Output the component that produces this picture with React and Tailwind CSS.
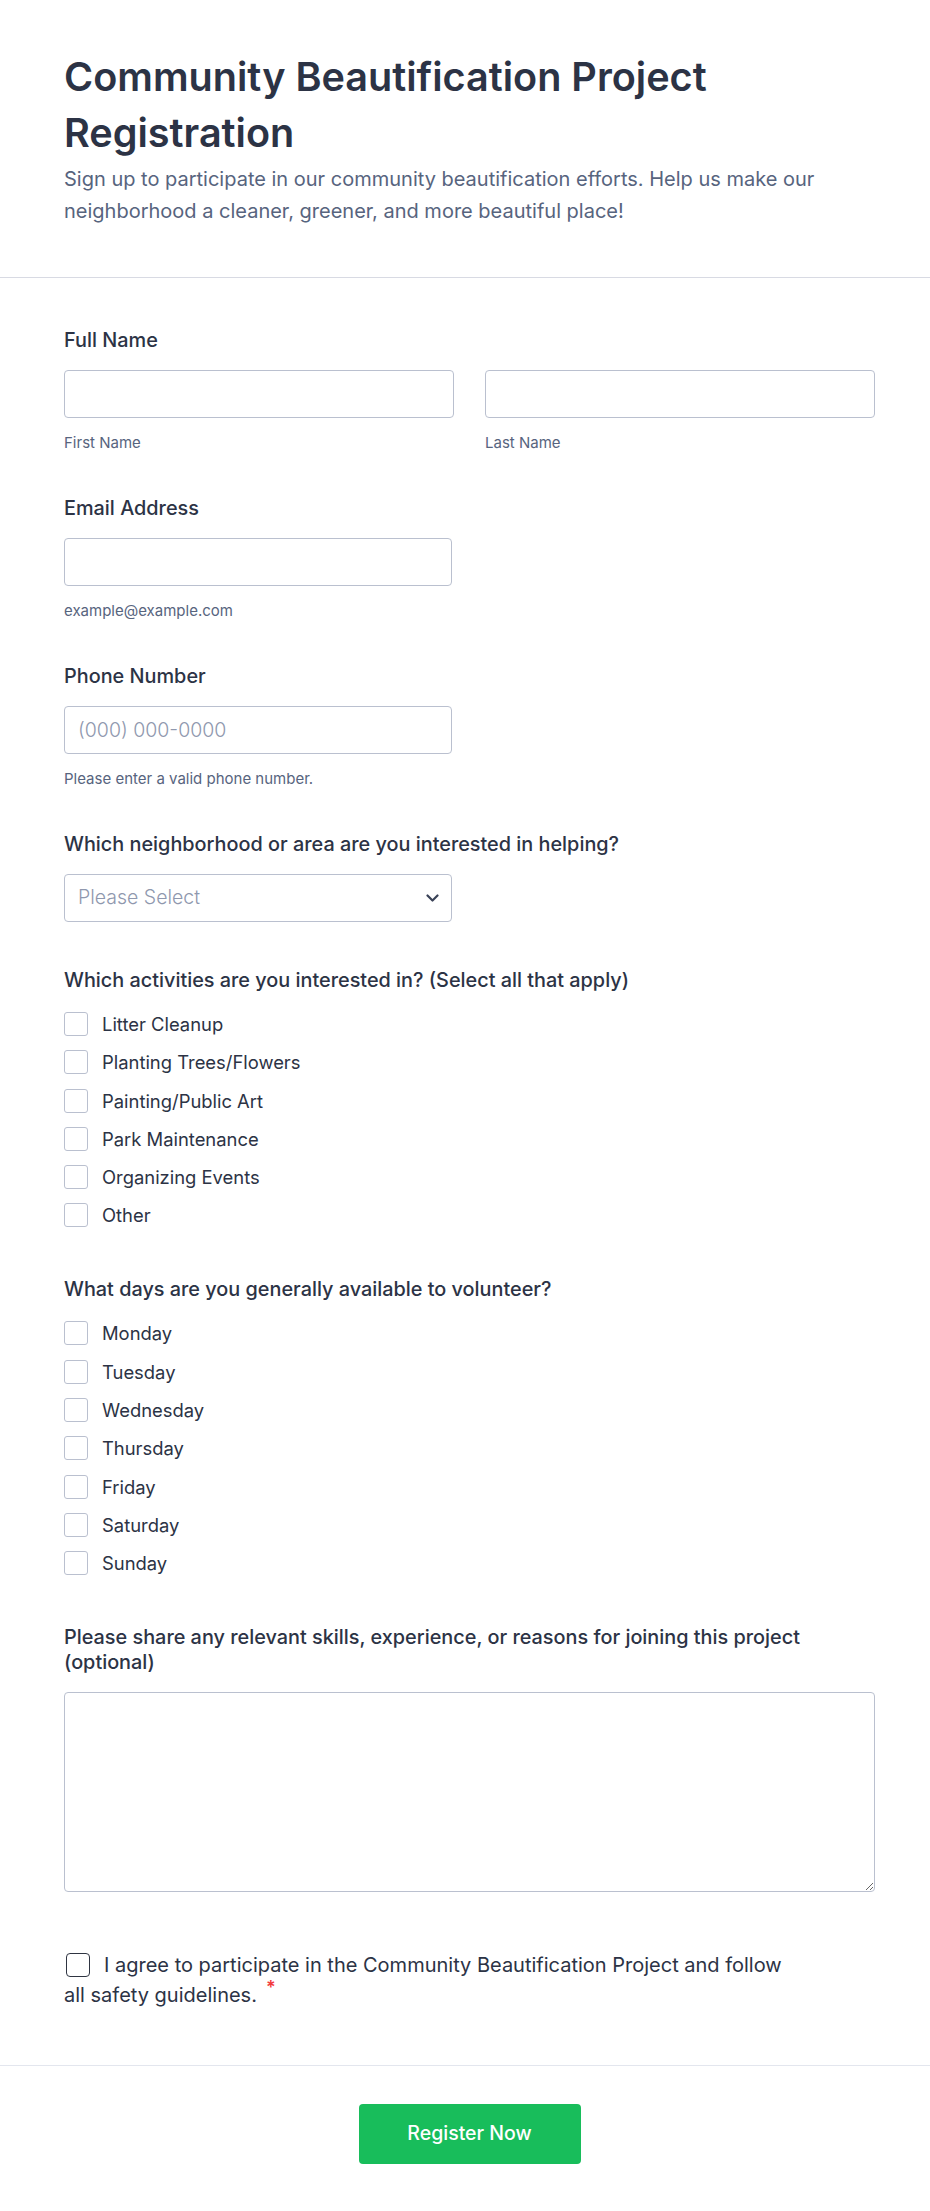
import { useState } from "react";

const activities = [
  "Litter Cleanup",
  "Planting Trees/Flowers",
  "Painting/Public Art",
  "Park Maintenance",
  "Organizing Events",
  "Other",
];

const days = ["Monday", "Tuesday", "Wednesday", "Thursday", "Friday", "Saturday", "Sunday"];

function Label({ children, className = "" }) {
  return (
    <label className={`block text-[19.85px] leading-[25px] font-medium text-[#2c3345] ${className}`}>
      {children}
    </label>
  );
}

function Sublabel({ children }) {
  return <p className="mt-[15px] text-[15px] leading-[20px] text-[#57647e]">{children}</p>;
}

const inputCls =
  "w-full h-12 rounded-[4px] border border-[#bac0cf] bg-white px-[13px] text-[19.5px] text-[#2c3345] placeholder:text-[#8f98ae] placeholder:font-light focus:outline-none";

function CheckList({ items }) {
  const [checked, setChecked] = useState({});
  return (
    <div className="mt-[19px] flex flex-col gap-[14.3px]">
      {items.map((item) => (
        <label key={item} className="flex items-center gap-[14px] h-6 text-[18.4px] leading-[24px] text-[#2c3345]">
          <input
            type="checkbox"
            checked={!!checked[item]}
            onChange={() => setChecked({ ...checked, [item]: !checked[item] })}
            className="appearance-none w-6 h-6 shrink-0 rounded-[3px] border border-[#bac0cf] bg-white checked:bg-[#2e69ff] checked:border-[#2e69ff]"
          />
          {item}
        </label>
      ))}
    </div>
  );
}

export default function App() {
  const [agree, setAgree] = useState(false);

  return (
    <div className="min-h-screen bg-white font-[Inter,sans-serif] text-[#2c3345]">
      {/* header */}
      <header className="pl-16 pr-[55px] pt-[49px] pb-[50px] border-b border-[#d8dae3]">
        <h1 className="text-[39.6px] leading-[56px] font-semibold text-[#2c3345]">
          Community Beautification Project Registration
        </h1>
        <p className="mt-[3px] text-[20px] leading-[31.5px] text-[#57647e]">
          Sign up to participate in our community beautification efforts. Help us make our
          neighborhood a cleaner, greener, and more beautiful place!
        </p>
      </header>

      <form className="pl-16 pr-[55px] pt-[50px] pb-[56px]" onSubmit={(e) => e.preventDefault()}>
        {/* name */}
        <div>
          <Label>Full Name</Label>
          <div className="mt-[17px] grid grid-cols-2 gap-[31px]">
            <div>
              <input type="text" className={inputCls} />
              <Sublabel>First Name</Sublabel>
            </div>
            <div>
              <input type="text" className={inputCls} />
              <Sublabel>Last Name</Sublabel>
            </div>
          </div>
        </div>

        {/* email */}
        <div className="mt-[43px]">
          <Label>Email Address</Label>
          <div className="mt-[17px] w-[388px]">
            <input type="email" className={inputCls} />
            <Sublabel>example@example.com</Sublabel>
          </div>
        </div>

        {/* phone */}
        <div className="mt-[43px]">
          <Label>Phone Number</Label>
          <div className="mt-[17px] w-[388px]">
            <input type="tel" placeholder="(000) 000-0000" className={inputCls} />
            <Sublabel>Please enter a valid phone number.</Sublabel>
          </div>
        </div>

        {/* neighborhood */}
        <div className="mt-[43px]">
          <Label>Which neighborhood or area are you interested in helping?</Label>
          <div className="relative mt-[17px] w-[388px]">
            <select
              defaultValue=""
              className="w-full h-12 appearance-none rounded-[4px] border border-[#bac0cf] bg-white px-[13px] text-[19.5px] font-light text-[#8f98ae] focus:outline-none"
            >
              <option value="" disabled>
                Please Select
              </option>
              <option>Downtown</option>
              <option>Riverside</option>
              <option>North End</option>
              <option>West Park</option>
            </select>
            <svg
              className="pointer-events-none absolute right-[13px] top-1/2 -translate-y-1/2"
              width="13"
              height="8"
              viewBox="0 0 13 8"
              fill="none"
            >
              <path d="M1.5 1.5L6.5 6.5l5-5" stroke="#3a4257" strokeWidth="2.2" strokeLinecap="round" strokeLinejoin="round" />
            </svg>
          </div>
        </div>

        {/* activities */}
        <div className="mt-[46px]">
          <Label>Which activities are you interested in? (Select all that apply)</Label>
          <CheckList items={activities} />
        </div>

        {/* days */}
        <div className="mt-[50px]">
          <Label>What days are you generally available to volunteer?</Label>
          <CheckList items={days} />
        </div>

        {/* textarea */}
        <div className="mt-[50px]">
          <Label>Please share any relevant skills, experience, or reasons for joining this project (optional)</Label>
          <textarea className="mt-[17px] block w-full h-[200px] rounded-[4px] border border-[#bac0cf] bg-white p-3 text-[18px] focus:outline-none" />
        </div>

        {/* agree */}
        <label className="mt-[59px] block max-w-[725px] text-[20px] leading-[28px] text-[#2c3345]">
          <input
            type="checkbox"
            checked={agree}
            onChange={() => setAgree(!agree)}
            className="appearance-none inline-block align-middle -mt-[4px] ml-[2px] mr-[14px] w-6 h-6 rounded-[4px] border-[1.5px] border-[#2f3542] bg-white checked:bg-[#2e69ff]"
          />
          I agree to participate in the Community Beautification Project and follow all safety guidelines.
          <span className="ml-[9px] align-super text-[18px] font-semibold leading-none text-[#f23a3c]">*</span>
        </label>
      </form>

      {/* submit */}
      <div className="border-t border-[#e3e6ee] pt-[38px] pb-[49px] pl-16 pr-[55px] flex justify-center">
        <button
          type="button"
          className="w-[222px] h-[60px] rounded-[4px] bg-[#18bd5b] text-white text-[19.5px] font-medium hover:bg-[#16a34f]"
        >
          Register Now
        </button>
      </div>
    </div>
  );
}
